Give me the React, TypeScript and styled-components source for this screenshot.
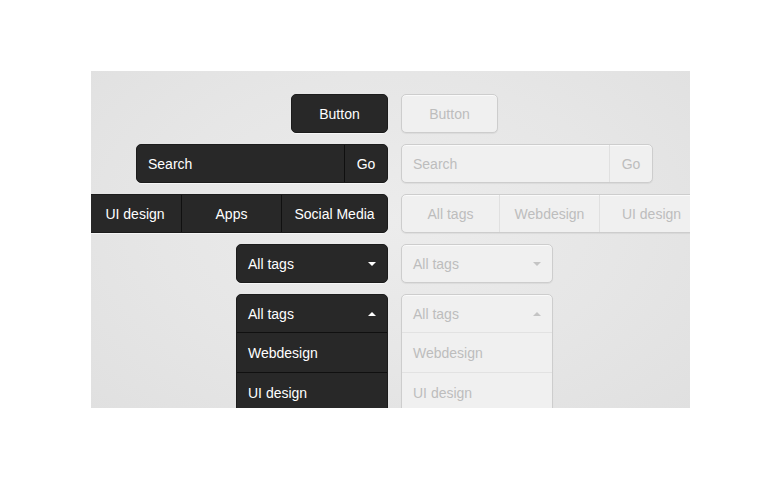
import React from "react";
import styled, { createGlobalStyle, css } from "styled-components";

const Global = createGlobalStyle`
  html, body { margin: 0; padding: 0; background: #ffffff; }
  body { font-family: "Liberation Sans", Arial, sans-serif; -webkit-font-smoothing: antialiased; }
`;

const Page = styled.div`
  padding: 71px 0 0 91px;
  width: 782px;
  height: 480px;
  box-sizing: border-box;
`;

const Panel = styled.div`
  width: 599px;
  height: 337px;
  overflow: hidden;
  box-sizing: border-box;
  background: radial-gradient(ellipse 70% 80% at 50% 45%, #ececec 0%, #e6e6e6 55%, #e0e0e0 100%);
  padding-top: 23px;
  display: grid;
  grid-template-columns: 297px 289px;
  column-gap: 13px;
  row-gap: 11px;
  grid-auto-rows: 39px;
  align-items: start;
`;

type Tone = { $dark?: boolean };

const Cell = styled.div<{ $side: "l" | "r" }>`
  display: flex;
  align-items: flex-start;
  justify-content: ${(p) => (p.$side === "l" ? "flex-end" : "flex-start")};
  height: 39px;
  overflow: visible;
`;

const base = css<Tone>`
  box-sizing: border-box;
  height: 39px;
  font-size: 14px;
  border-radius: 5px;
  ${(p) =>
    p.$dark
      ? css`
          background: #282828;
          color: #ffffff;
          border: 1px solid #1c1c1c;
          box-shadow: 0 1px 0 rgba(255, 255, 255, 0.6);
        `
      : css`
          background: #f0f0f0;
          color: #bdbdbd;
          border: 1px solid #cdcdcd;
          box-shadow: 0 1px 1px rgba(0, 0, 0, 0.06), inset 0 1px 0 #fafafa;
        `}
`;

const Button = styled.div<Tone>`
  ${base}
  width: 97px;
  display: flex;
  align-items: center;
  justify-content: center;
`;

const SearchBox = styled.div<Tone & { $w: number }>`
  ${base}
  width: ${(p) => p.$w}px;
  display: flex;
  align-items: stretch;
  overflow: hidden;
`;

const SearchField = styled.div`
  flex: 1;
  display: flex;
  align-items: center;
  padding-left: 11px;
`;

const GoButton = styled.div<Tone>`
  width: 42px;
  display: flex;
  align-items: center;
  justify-content: center;
  border-left: 1px solid ${(p) => (p.$dark ? "#0f0f0f" : "#e0e0e0")};
`;

const TabGroup = styled.div<Tone>`
  ${base}
  display: flex;
  flex-shrink: 0;
  overflow: hidden;
`;

const Tab = styled.div<Tone & { $w: number; $divider: boolean; $shift?: number }>`
  box-sizing: border-box;
  width: ${(p) => p.$w}px;
  flex-shrink: 0;
  display: flex;
  align-items: center;
  justify-content: center;
  padding-left: ${(p) => p.$shift ?? 0}px;
  border-left: ${(p) =>
    p.$divider ? `1px solid ${p.$dark ? "#101010" : "#e0e0e0"}` : "none"};
`;

const Select = styled.div<Tone>`
  ${base}
  width: 152px;
  height: auto;
  flex-shrink: 0;
  overflow: hidden;
`;

const SelectHead = styled.div<Tone & { $open?: boolean }>`
  height: 37px;
  display: flex;
  align-items: center;
  justify-content: space-between;
  padding: 0 11px;
  ${(p) =>
    p.$open &&
    css`
      border-bottom: 1px solid ${p.$dark ? "#101010" : "#e2e2e2"};
    `}
`;

const Caret = styled.span<Tone & { $up?: boolean }>`
  width: 0;
  height: 0;
  border-left: 4px solid transparent;
  border-right: 4px solid transparent;
  ${(p) =>
    p.$up
      ? css`
          border-bottom: 4px solid ${p.$dark ? "#ffffff" : "#c4c4c4"};
        `
      : css`
          border-top: 4px solid ${p.$dark ? "#ffffff" : "#c4c4c4"};
        `}
  margin-top: 1px;
`;

const Option = styled.div<Tone & { $divider?: boolean }>`
  height: 39px;
  display: flex;
  align-items: center;
  padding: 0 11px;
  border-top: ${(p) =>
    p.$divider ? `1px solid ${p.$dark ? "#101010" : "#e2e2e2"}` : "none"};
`;

const darkTabs = [
  { label: "UI design", w: 100, shift: 8 },
  { label: "Apps", w: 100, shift: 0 },
  { label: "Social Media", w: 106, shift: 0 },
];
const lightTabs = [
  { label: "All tags", w: 97 },
  { label: "Webdesign", w: 100 },
  { label: "UI design", w: 104 },
];

function Dropdown({ dark, open }: { dark: boolean; open?: boolean }) {
  return (
    <Select $dark={dark}>
      <SelectHead $dark={dark} $open={open}>
        <span>All tags</span>
        <Caret $dark={dark} $up={open} />
      </SelectHead>
      {open && (
        <>
          <Option $dark={dark}>Webdesign</Option>
          <Option $dark={dark} $divider>
            UI design
          </Option>
        </>
      )}
    </Select>
  );
}

export default function App() {
  return (
    <>
      <Global />
      <Page>
        <Panel>
          <Cell $side="l">
            <Button $dark>Button</Button>
          </Cell>
          <Cell $side="r">
            <Button>Button</Button>
          </Cell>

          <Cell $side="l">
            <SearchBox $dark $w={252}>
              <SearchField>Search</SearchField>
              <GoButton $dark>Go</GoButton>
            </SearchBox>
          </Cell>
          <Cell $side="r">
            <SearchBox $w={252}>
              <SearchField>Search</SearchField>
              <GoButton>Go</GoButton>
            </SearchBox>
          </Cell>

          <Cell $side="l">
            <TabGroup $dark>
              {darkTabs.map((t, i) => (
                <Tab key={t.label} $dark $w={t.w} $shift={t.shift} $divider={i > 0}>
                  {t.label}
                </Tab>
              ))}
            </TabGroup>
          </Cell>
          <Cell $side="r">
            <TabGroup>
              {lightTabs.map((t, i) => (
                <Tab key={t.label} $w={t.w} $divider={i > 0}>
                  {t.label}
                </Tab>
              ))}
            </TabGroup>
          </Cell>

          <Cell $side="l">
            <Dropdown dark />
          </Cell>
          <Cell $side="r">
            <Dropdown dark={false} />
          </Cell>

          <Cell $side="l">
            <Dropdown dark open />
          </Cell>
          <Cell $side="r">
            <Dropdown dark={false} open />
          </Cell>
        </Panel>
      </Page>
    </>
  );
}
